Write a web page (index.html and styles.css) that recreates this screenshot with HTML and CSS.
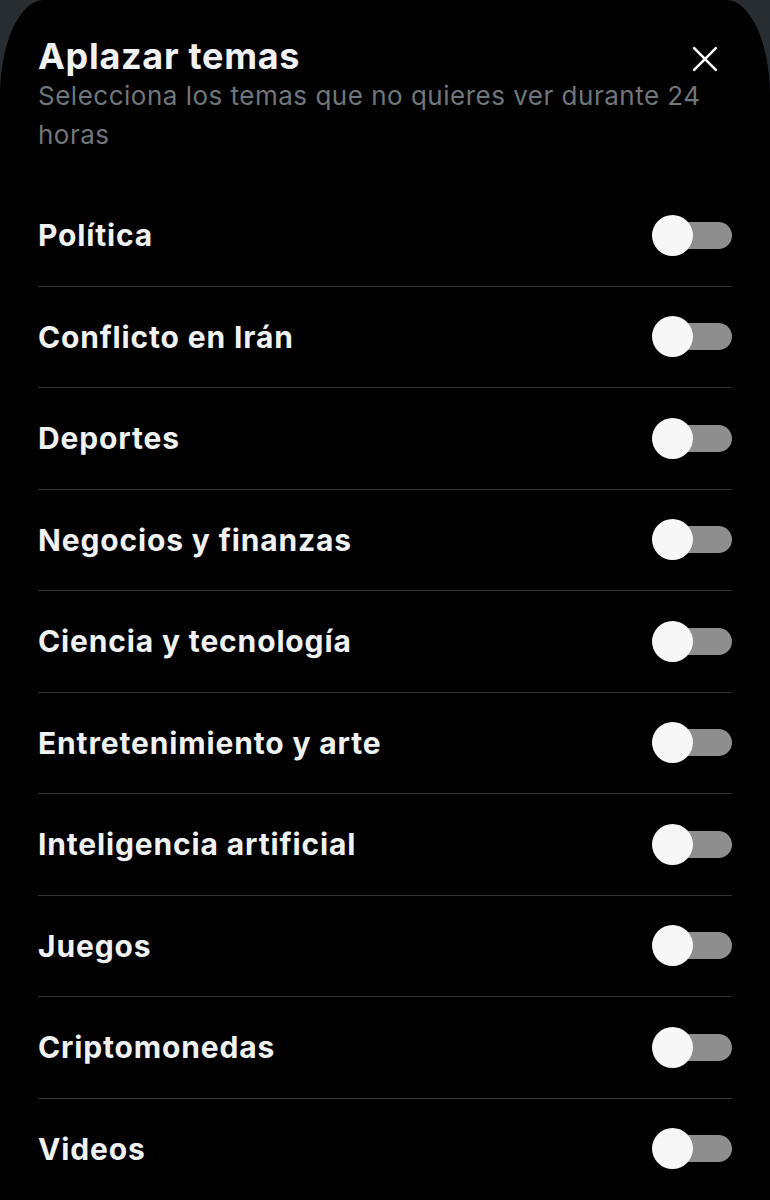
FILE: index.html
```html
<!DOCTYPE html>
<html lang="es">
<head>
    <meta charset="UTF-8">
    <meta name="viewport" content="width=device-width, initial-scale=1.0">
    <title>Aplazar temas</title>
    <link rel="stylesheet" href="styles.css">
</head>
<body>
    <div class="sheet">
        <div class="sheet-header">
            <div class="title-row">
                <h1>Aplazar temas</h1>
                <button class="close" aria-label="Cerrar">
                    <svg viewBox="0 0 24 24" width="26" height="26">
                        <path d="M2 2 L22 22 M22 2 L2 22" stroke="#fff" stroke-width="2.4" stroke-linecap="round"/>
                    </svg>
                </button>
            </div>
            <p class="subtitle">Selecciona los temas que no quieres ver durante 24 horas</p>
        </div>

        <ul id="topics" class="topics"></ul>
    </div>

    <script>
        const topics = [
            'Política',
            'Conflicto en Irán',
            'Deportes',
            'Negocios y finanzas',
            'Ciencia y tecnología',
            'Entretenimiento y arte',
            'Inteligencia artificial',
            'Juegos',
            'Criptomonedas',
            'Videos',
        ];

        const list = document.getElementById('topics');
        topics.forEach(name => {
            const li = document.createElement('li');
            li.className = 'topic';
            li.innerHTML = `
                <span class="topic-name">${name}</span>
                <span class="toggle"><span class="knob"></span></span>
            `;
            list.appendChild(li);
        });
    </script>
</body>
</html>
```

FILE: styles.css
```css
body {
    margin: 0;
    padding: 0;
    background-color: #282d32;
    font-family: 'Inter', 'Liberation Sans', sans-serif;
    color: #e7e9ea;
}

.sheet {
    background-color: #000;
    min-height: 1200px;
    border-radius: 44px 44px 0 0 / 96px 96px 0 0;
    padding: 0 38px;
    box-sizing: border-box;
}

.sheet-header {
    padding-top: 36px;
    height: 185px;
    box-sizing: border-box;
}

.title-row {
    display: flex;
    justify-content: space-between;
    align-items: flex-start;
}

.sheet-header h1 {
    margin: 0;
    font-size: 36px;
    line-height: 40px;
    font-weight: 700;
    letter-spacing: 0.7px;
    color: #eff1f2;
}

.subtitle {
    margin: 0;
    font-size: 26px;
    line-height: 39px;
    letter-spacing: 0.5px;
    color: #71767b;
    max-width: 672px;
}

.close {
    background: none;
    border: none;
    padding: 0;
    margin-top: 10px;
    margin-right: 14px;
    cursor: pointer;
}

.topics {
    list-style: none;
    margin: 0;
    padding: 0;
}

.topic {
    display: flex;
    align-items: center;
    justify-content: space-between;
    height: 100.5px;
    border-bottom: 1px solid #2f3336;
}

.topic:last-child {
    border-bottom: none;
}

.topic-name {
    font-size: 30px;
    font-weight: 700;
    letter-spacing: 0.85px;
    color: #eff1f2;
}

.toggle {
    position: relative;
    display: block;
    width: 80px;
    height: 41px;
}

.toggle::before {
    content: '';
    position: absolute;
    right: 0;
    top: 7px;
    width: 70px;
    height: 27px;
    border-radius: 14px;
    background-color: #8e8e8e;
}

.toggle .knob {
    position: absolute;
    left: 0;
    top: 0;
    width: 41px;
    height: 41px;
    border-radius: 50%;
    background-color: #f7f7f7;
}
```
